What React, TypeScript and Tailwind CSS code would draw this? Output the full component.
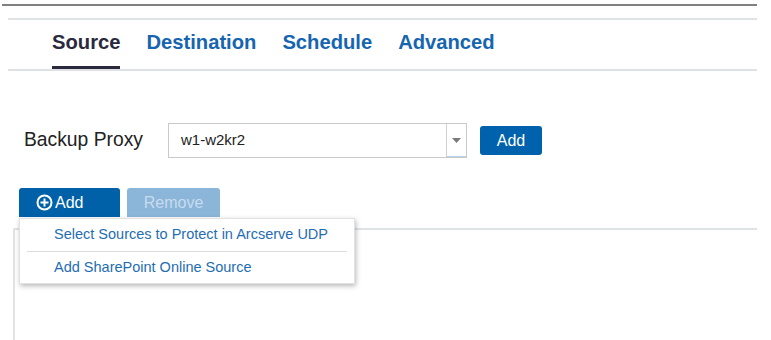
import { useState } from "react";

const tabs = ["Source", "Destination", "Schedule", "Advanced"];

function PlusCircle() {
	return (
		<svg width="17" height="17" viewBox="0 0 17 17" fill="none">
			<circle cx="8.5" cy="8.5" r="7" stroke="white" strokeWidth="2" />
			<path d="M8.5 4.5v8M4.5 8.5h8" stroke="white" strokeWidth="2" />
		</svg>
	);
}

export default function App() {
	const [active, setActive] = useState("Source");

	return (
		<div
			className="w-[771px] h-[340px] bg-white overflow-hidden"
			style={{ fontFamily: '"Liberation Sans", Arial, sans-serif' }}
		>
			{/* window top edges */}
			<div className="pt-[4px]">
				<div className="h-[2px] bg-[#808080] ml-[2px] mr-[14px]" />
			</div>
			<div className="mt-[12px] h-[2px] bg-[#dfe3e8] ml-[8px] mr-[14px]" />

			{/* tabs */}
			<div className="ml-[8px] mr-[14px] border-b-2 border-[#dde1e6] pl-[43px] flex gap-[24px]">
				{tabs.map((t) => (
					<button
						key={t}
						onClick={() => setActive(t)}
						className="flex flex-col px-[1px] pt-[11px] text-[20.2px] leading-[23px] font-bold"
					>
						<span className={t === active ? "text-[#2a2a3c]" : "text-[#1565b0]"}>{t}</span>
						<span
							className={
								"mt-[12px] h-[3px] w-full " + (t === active ? "bg-[#2a2a3c]" : "bg-transparent")
							}
						/>
					</button>
				))}
			</div>

			{/* backup proxy row */}
			<div className="mt-[52px] pl-[24px] flex items-center">
				<span className="text-[19.3px] text-[#222] w-[144px]">Backup Proxy</span>
				<div className="flex h-[35px] w-[299px] border border-[#c9c9c9] bg-white">
					<div className="flex-1 flex items-center pl-[12px] text-[15px] text-[#222]">w1-w2kr2</div>
					<div className="w-[20px] border-l border-[#d0d0d0] border-b border-b-[#bcd3ea] flex items-center justify-center">
						<svg width="9" height="5" viewBox="0 0 9 5">
							<path d="M0 0h9L4.5 5z" fill="#7a7a7a" />
						</svg>
					</div>
				</div>
				<button className="ml-[13px] h-[29px] w-[62px] rounded-[3px] bg-[#0062ad] text-white text-[16px]">
					Add
				</button>
			</div>

			{/* toolbar */}
			<div className="relative mt-[30px] pl-[19px] flex gap-[7px]">
				<button className="h-[29px] w-[101px] rounded-t-[3px] bg-[#0061a8] text-white text-[16px] flex items-center pl-[17px] gap-[2px]">
					<PlusCircle />
					<span>Add</span>
				</button>
				<button className="h-[29px] w-[93px] rounded-t-[3px] bg-[#8bb5d9] text-[#c8dcee] text-[16px]">
					Remove
				</button>

				{/* dropdown menu */}
				<div className="absolute left-[19px] top-[30px] z-10 w-[336px] h-[66px] bg-white border border-[#e2e2e2] shadow-[1px_2px_5px_rgba(0,0,0,0.28)] px-[7px]">
					<div className="h-[32px] flex items-center pl-[27px] text-[14.5px] text-[#1f6db3]">
						Select Sources to Protect in Arcserve UDP
					</div>
					<div className="h-px bg-[#dcdcdc]" />
					<div className="h-[32px] flex items-center pl-[27px] text-[14.5px] text-[#1f6db3]">
						Add SharePoint Online Source
					</div>
				</div>
			</div>

			{/* source list panel */}
			<div className="mt-[11px] ml-[13px] mr-[14px] h-[140px] border-t-2 border-l-2 border-[#dfe2e6]" />
		</div>
	);
}
